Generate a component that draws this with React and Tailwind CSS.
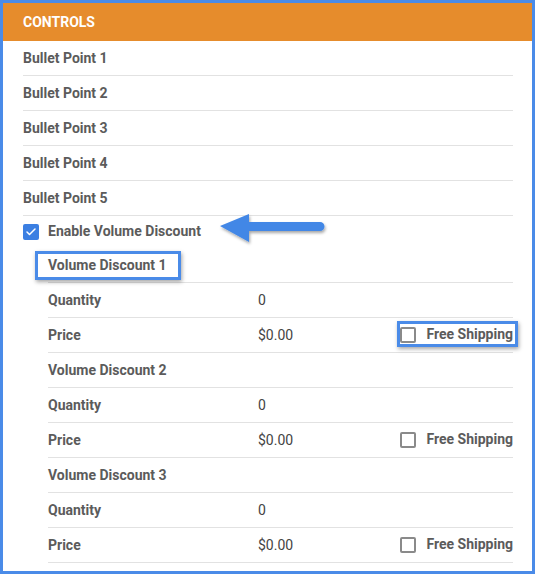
import { Check } from 'lucide-react';

const font = { fontFamily: 'Roboto, "Liberation Sans", sans-serif' };

function Box({ checked }) {
  if (checked) {
    return (
      <span className="flex h-4 w-4 items-center justify-center rounded-[2px] bg-[#3b7fe2]">
        <Check size={12} strokeWidth={3} className="text-white" />
      </span>
    );
  }
  return <span className="block h-4 w-4 rounded-[2px] border-2 border-[#8a8a8a] bg-white" />;
}

function Row({ children, className = '' }) {
  return (
    <div className={`relative flex h-[35px] items-center border-b border-[#e2e2e2] text-[14px] font-bold text-[#5b5b5b] ${className}`}>
      {children}
    </div>
  );
}

function Discount({ n, highlight }) {
  return (
    <>
      <Row>
        {highlight && (
          <span className="absolute left-[-13px] top-[3px] h-[29px] w-[146px] border-[3px] border-[#4a8be8] shadow-[1px_2px_4px_rgba(0,0,0,0.35)]" />
        )}
        <span className="relative">Volume Discount {n}</span>
      </Row>
      <Row>
        <span className="w-[210px]">Quantity</span>
        <span className="font-normal text-[#444]">0</span>
      </Row>
      <Row>
        {highlight && (
          <span className="absolute right-[-5px] top-[3px] h-[26px] w-[121px] border-[3px] border-[#4a8be8] shadow-[1px_2px_4px_rgba(0,0,0,0.35)]" />
        )}
        <span className="w-[210px]">Price</span>
        <span className="font-normal text-[#444]">$0.00</span>
        <div className="relative ml-auto flex items-center gap-[10px]">
          <Box />
          <span className="-mt-[2px]">Free Shipping</span>
        </div>
      </Row>
    </>
  );
}

export default function App() {
  return (
    <div style={font} className="h-[574px] w-[535px] border-[3px] border-[#4a8be8] bg-white">
      <div className="flex h-[38px] items-center bg-[#e68c2c] px-5 text-[14px] font-bold text-white">CONTROLS</div>
      <div className="pl-5 pr-[19px]">
        {[1, 2, 3, 4, 5].map((i) => (
          <Row key={i}>Bullet Point {i}</Row>
        ))}
        <div className="relative flex h-[32px] items-center gap-[9px] text-[14px] font-bold text-[#5b5b5b]">
          <Box checked />
          <span className="-mt-[1px]">Enable Volume Discount</span>
          <svg className="absolute left-[193px] top-[-4px]" width="112" height="36" viewBox="0 0 112 36">
            <defs>
              <filter id="sh" x="-10%" y="-20%" width="130%" height="160%">
                <feDropShadow dx="1" dy="2" stdDeviation="1.5" floodColor="#000" floodOpacity="0.35" />
              </filter>
            </defs>
            <g filter="url(#sh)">
              <path d="M4 14 L33 2 L33 10 L104 10 A4.5 4.5 0 0 1 104 19 L33 19 L33 30 Z" fill="#4287e6" />
            </g>
          </svg>
        </div>
        <div className="pl-[25px]">
          <Discount n={1} highlight />
          <Discount n={2} />
          <Discount n={3} />
        </div>
      </div>
    </div>
  );
}
